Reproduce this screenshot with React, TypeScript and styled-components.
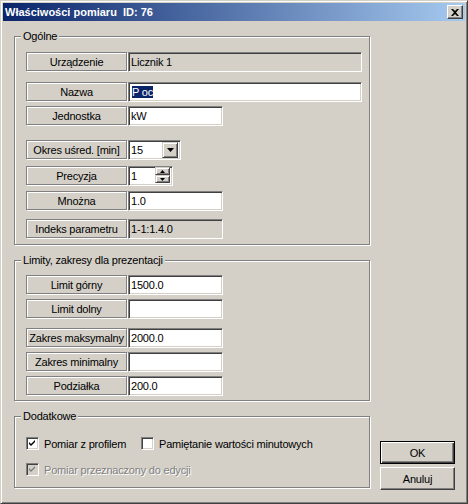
import React from 'react';
import styled, { createGlobalStyle, css } from 'styled-components';

const colors = {
  face: '#d4d0c8',
  shadow: '#808080',
  dark: '#404040',
  light: '#ffffff',
  navy: '#0a246a',
  sky: '#a6caf0',
};

const GlobalStyle = createGlobalStyle`
  html, body {
    margin: 0;
    padding: 0;
    background: ${colors.face};
  }
  body {
    font-family: 'Liberation Sans', Arial, sans-serif;
    font-size: 11px;
    letter-spacing: -0.2px;
    color: #000;
  }
`;

const Window = styled.div`
  width: 468px;
  height: 504px;
  box-sizing: border-box;
  background: ${colors.face};
  border: 1px solid;
  border-color: ${colors.face} ${colors.dark} ${colors.dark} ${colors.face};
  box-shadow: inset 1px 1px ${colors.light}, inset -1px -1px ${colors.shadow};
  padding: 2px;
  display: flex;
  flex-direction: column;
`;

const TitleBar = styled.div`
  height: 18px;
  flex: none;
  background: linear-gradient(90deg, ${colors.navy}, ${colors.sky});
  display: flex;
  align-items: center;
  justify-content: space-between;
  padding: 0 2px;
`;

const Title = styled.span`
  color: #fff;
  font-weight: bold;
  font-size: 11px;
  letter-spacing: 0;
  white-space: pre;
`;

const CloseButton = styled.div`
  width: 16px;
  height: 14px;
  box-sizing: border-box;
  background: ${colors.face};
  border: 1px solid;
  border-color: ${colors.light} ${colors.dark} ${colors.dark} ${colors.light};
  box-shadow: inset -1px -1px ${colors.shadow};
  display: flex;
  align-items: center;
  justify-content: center;
`;

const Body = styled.div`
  flex: 1;
  display: flex;
  padding: 15px 0 0 11px;
`;

const LeftColumn = styled.div`
  width: 356px;
  display: flex;
  flex-direction: column;
  gap: 15px;
`;

const RightColumn = styled.div`
  margin-left: 10px;
  align-self: flex-end;
  margin-bottom: 11px;
  display: flex;
  flex-direction: column;
  gap: 3px;
`;

const Group = styled.div<{ $height: number }>`
  position: relative;
  box-sizing: border-box;
  width: 356px;
  height: ${(p) => p.$height}px;
  border: 1px solid ${colors.shadow};
  box-shadow: inset 1px 1px ${colors.light}, 1px 1px ${colors.light};
  padding-left: 11px;
`;

const Legend = styled.span`
  position: absolute;
  top: -7px;
  left: 6px;
  padding: 0 2px;
  line-height: 13px;
  background: ${colors.face};
`;

const Row = styled.div<{ $gap: number }>`
  display: flex;
  align-items: flex-start;
  margin-top: ${(p) => p.$gap}px;
`;

const Label = styled.div`
  box-sizing: border-box;
  width: 101px;
  height: 19px;
  margin-right: 1px;
  border: 1px solid ${colors.shadow};
  box-shadow: inset 1px 1px ${colors.light}, 1px 1px ${colors.light};
  display: flex;
  align-items: center;
  justify-content: center;
  white-space: nowrap;
`;

const sunken = css`
  border: 1px solid;
  border-color: ${colors.shadow} ${colors.light} ${colors.light} ${colors.shadow};
  box-shadow: inset 1px 1px ${colors.dark}, inset -1px -1px ${colors.face};
`;

const Field = styled.div<{ $width: number; $disabled?: boolean }>`
  box-sizing: border-box;
  width: ${(p) => p.$width}px;
  height: 20px;
  background: ${(p) => (p.$disabled ? colors.face : '#fff')};
  ${sunken};
  padding: 0 2px;
  display: flex;
  align-items: center;
  justify-content: space-between;
  white-space: nowrap;
`;

const Selected = styled.span`
  background: ${colors.navy};
  color: #fff;
  line-height: 12px;
  margin-left: 1px;
`;

const raised = css`
  background: ${colors.face};
  border: 1px solid;
  border-color: ${colors.face} ${colors.dark} ${colors.dark} ${colors.face};
  box-shadow: inset 1px 1px ${colors.light}, inset -1px -1px ${colors.shadow};
`;

const DropButton = styled.div`
  box-sizing: border-box;
  width: 16px;
  height: 16px;
  ${raised};
  display: flex;
  align-items: center;
  justify-content: center;
`;

const SpinStack = styled.div`
  display: flex;
  flex-direction: column;
  align-self: stretch;
`;

const SpinButton = styled.div`
  box-sizing: border-box;
  width: 15px;
  height: 8px;
  ${raised};
  display: flex;
  align-items: center;
  justify-content: center;
`;

const CheckRow = styled.div<{ $gap: number }>`
  display: flex;
  align-items: center;
  margin-top: ${(p) => p.$gap}px;
  height: 13px;
`;

const CheckItem = styled.div<{ $width?: number; $disabled?: boolean }>`
  display: flex;
  align-items: center;
  width: ${(p) => (p.$width ? `${p.$width}px` : 'auto')};
  color: ${(p) => (p.$disabled ? colors.shadow : '#000')};
  text-shadow: ${(p) => (p.$disabled ? `1px 1px ${colors.light}` : 'none')};
  white-space: nowrap;
`;

const Box = styled.div<{ $disabled?: boolean }>`
  box-sizing: border-box;
  width: 13px;
  height: 13px;
  margin-right: 5px;
  flex: none;
  background: ${(p) => (p.$disabled ? colors.face : '#fff')};
  ${sunken};
  display: flex;
  align-items: center;
  justify-content: center;
`;

const Button = styled.button<{ $default?: boolean }>`
  box-sizing: border-box;
  width: 75px;
  height: 23px;
  padding: 0;
  font: inherit;
  letter-spacing: inherit;
  color: #000;
  background: ${colors.face};
  ${(p) =>
    p.$default
      ? css`
          border: 1px solid #000;
          box-shadow: inset 1px 1px ${colors.light}, inset -1px -1px ${colors.dark},
            inset -2px -2px ${colors.shadow};
        `
      : css`
          border: 1px solid;
          border-color: ${colors.light} ${colors.dark} ${colors.dark} ${colors.light};
          box-shadow: inset -1px -1px ${colors.shadow};
        `}
`;

const Arrow = ({ up = false, small = false }: { up?: boolean; small?: boolean }) => {
  const w = small ? 5 : 7;
  const h = small ? 3 : 4;
  const points = up ? `0,${h} ${w},${h} ${w / 2},0` : `0,0 ${w},0 ${w / 2},${h}`;
  return (
    <svg width={w} height={h} viewBox={`0 0 ${w} ${h}`}>
      <polygon points={points} fill="#000" />
    </svg>
  );
};

const CheckMark = ({ color }: { color: string }) => (
  <svg width="7" height="7" viewBox="0 0 7 7">
    <path d="M0 2 L2 4 L6 0 L6 2 L2 6 L0 4 Z" fill={color} />
  </svg>
);

type FieldRow = {
  label: string;
  gap: number;
  width: number;
  value?: string;
};

const limits: FieldRow[] = [
  { label: 'Limit górny', gap: 14, width: 95, value: '1500.0' },
  { label: 'Limit dolny', gap: 4, width: 95 },
  { label: 'Zakres maksymalny', gap: 9, width: 95, value: '2000.0' },
  { label: 'Zakres minimalny', gap: 4, width: 95 },
  { label: 'Podziałka', gap: 4, width: 95, value: '200.0' },
];

export default function App() {
  return (
    <>
      <GlobalStyle />
      <Window>
        <TitleBar>
          <Title>Właściwości pomiaru  ID: 76</Title>
          <CloseButton>
            <svg width="8" height="7" viewBox="0 0 8 7">
              <path d="M0 0 L2 0 L4 2 L6 0 L8 0 L5 3.5 L8 7 L6 7 L4 5 L2 7 L0 7 L3 3.5 Z" fill="#000" />
            </svg>
          </CloseButton>
        </TitleBar>
        <Body>
          <LeftColumn>
            <Group $height={209}>
              <Legend>Ogólne</Legend>
              <Row $gap={15}>
                <Label>Urządzenie</Label>
                <Field $width={234} $disabled>Licznik 1</Field>
              </Row>
              <Row $gap={10}>
                <Label>Nazwa</Label>
                <Field $width={234}>
                  <Selected>P oc</Selected>
                  <span />
                </Field>
              </Row>
              <Row $gap={4}>
                <Label>Jednostka</Label>
                <Field $width={95}>kW</Field>
              </Row>
              <Row $gap={14}>
                <Label>Okres uśred. [min]</Label>
                <Field $width={53}>
                  <span>15</span>
                  <DropButton>
                    <Arrow />
                  </DropButton>
                </Field>
              </Row>
              <Row $gap={6}>
                <Label>Precyzja</Label>
                <Field $width={45}>
                  <span>1</span>
                  <SpinStack>
                    <SpinButton>
                      <Arrow up small />
                    </SpinButton>
                    <SpinButton>
                      <Arrow small />
                    </SpinButton>
                  </SpinStack>
                </Field>
              </Row>
              <Row $gap={5}>
                <Label>Mnożna</Label>
                <Field $width={95}>1.0</Field>
              </Row>
              <Row $gap={8}>
                <Label>Indeks parametru</Label>
                <Field $width={95} $disabled>1-1:1.4.0</Field>
              </Row>
            </Group>
            <Group $height={141}>
              <Legend>Limity, zakresy dla prezentacji</Legend>
              {limits.map((r) => (
                <Row key={r.label} $gap={r.gap}>
                  <Label>{r.label}</Label>
                  <Field $width={r.width}>{r.value}</Field>
                </Row>
              ))}
            </Group>
            <Group $height={72}>
              <Legend>Dodatkowe</Legend>
              <CheckRow $gap={20}>
                <CheckItem $width={115}>
                  <Box>
                    <CheckMark color="#000" />
                  </Box>
                  Pomiar z profilem
                </CheckItem>
                <CheckItem>
                  <Box />
                  Pamiętanie wartości minutowych
                </CheckItem>
              </CheckRow>
              <CheckRow $gap={13}>
                <CheckItem $disabled>
                  <Box $disabled>
                    <CheckMark color={colors.shadow} />
                  </Box>
                  Pomiar przeznaczony do edycji
                </CheckItem>
              </CheckRow>
            </Group>
          </LeftColumn>
          <RightColumn>
            <Button $default>OK</Button>
            <Button>Anuluj</Button>
          </RightColumn>
        </Body>
      </Window>
    </>
  );
}
